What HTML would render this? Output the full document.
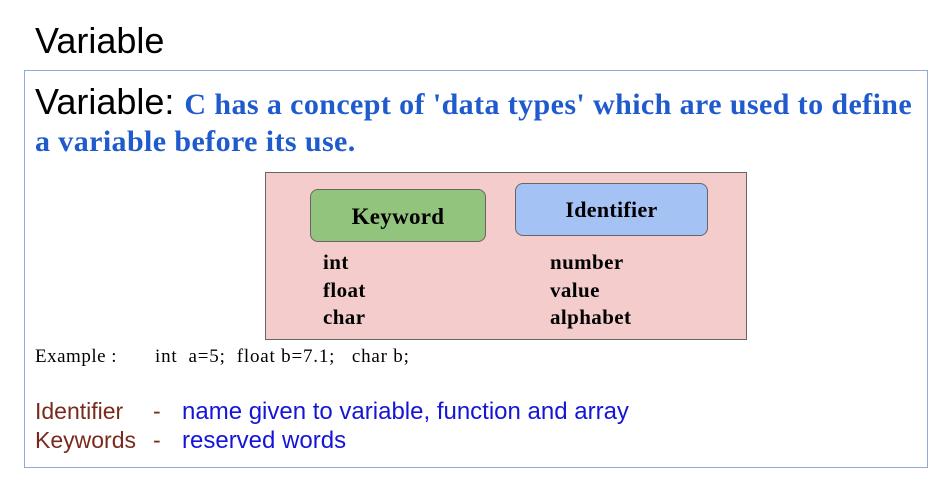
<!DOCTYPE html>
<html><head><style>
body{margin:0;width:945px;height:499px;background:#fff;position:relative;overflow:hidden;font-family:"Liberation Sans",sans-serif}
.a{position:absolute;white-space:nowrap}
.s{font-family:"Liberation Serif",serif}
.b{font-weight:bold}
.bl{color:#1f5bcc;font-family:"Liberation Serif",serif;font-weight:bold;font-size:30px;letter-spacing:0.4px}
.k{font-family:"Liberation Serif",serif;font-weight:bold;font-size:21px;line-height:27.5px;letter-spacing:0.4px}
.r{color:#7a2a1c;font-size:23px}
.u{color:#1515d8;font-size:24px}
</style></head><body>
<div class="a" style="left:35px;top:20px;font-size:36px">Variable</div>
<div class="a" style="left:24px;top:70px;width:902px;height:396px;border:1px solid #8fa9dc"></div>
<div class="a" style="left:35px;top:81px;font-size:36px">Variable: <span class="bl">C has a concept of 'data types' which are used to define</span></div>
<div class="a bl" style="left:35px;top:125px">a variable before its use.</div>
<div class="a" style="left:265px;top:172px;width:480px;height:166px;background:#f4cccc;border:1px solid #666"></div>
<div class="a s b" style="left:310px;top:189px;width:174px;height:51px;background:#93c47d;border:1px solid #666;border-radius:8px;font-size:23px;line-height:53px;text-align:center;letter-spacing:0.3px">Keyword</div>
<div class="a s b" style="left:515px;top:183px;width:191px;height:51px;background:#a4c2f4;border:1px solid #666;border-radius:8px;font-size:22px;line-height:52px;text-align:center;letter-spacing:0.3px">Identifier</div>
<div class="a k" style="left:323px;top:249px">int<br>float<br>char</div>
<div class="a k" style="left:550px;top:249px">number<br>value<br>alphabet</div>
<div class="a s" style="left:35px;top:346px;font-size:19px;letter-spacing:0.5px">Example :</div>
<div class="a s" style="left:155px;top:346px;font-size:19px;white-space:pre;letter-spacing:0.8px">int  a=5;  float b=7.1;   char b;</div>
<div class="a r" style="left:35px;top:398px">Identifier</div>
<div class="a r" style="left:153px;top:398px">-</div>
<div class="a u" style="left:182px;top:398px">name given to variable, function and array</div>
<div class="a r" style="left:35px;top:427px">Keywords</div>
<div class="a r" style="left:153px;top:427px">-</div>
<div class="a u" style="left:182px;top:427px">reserved words</div>
</body></html>
